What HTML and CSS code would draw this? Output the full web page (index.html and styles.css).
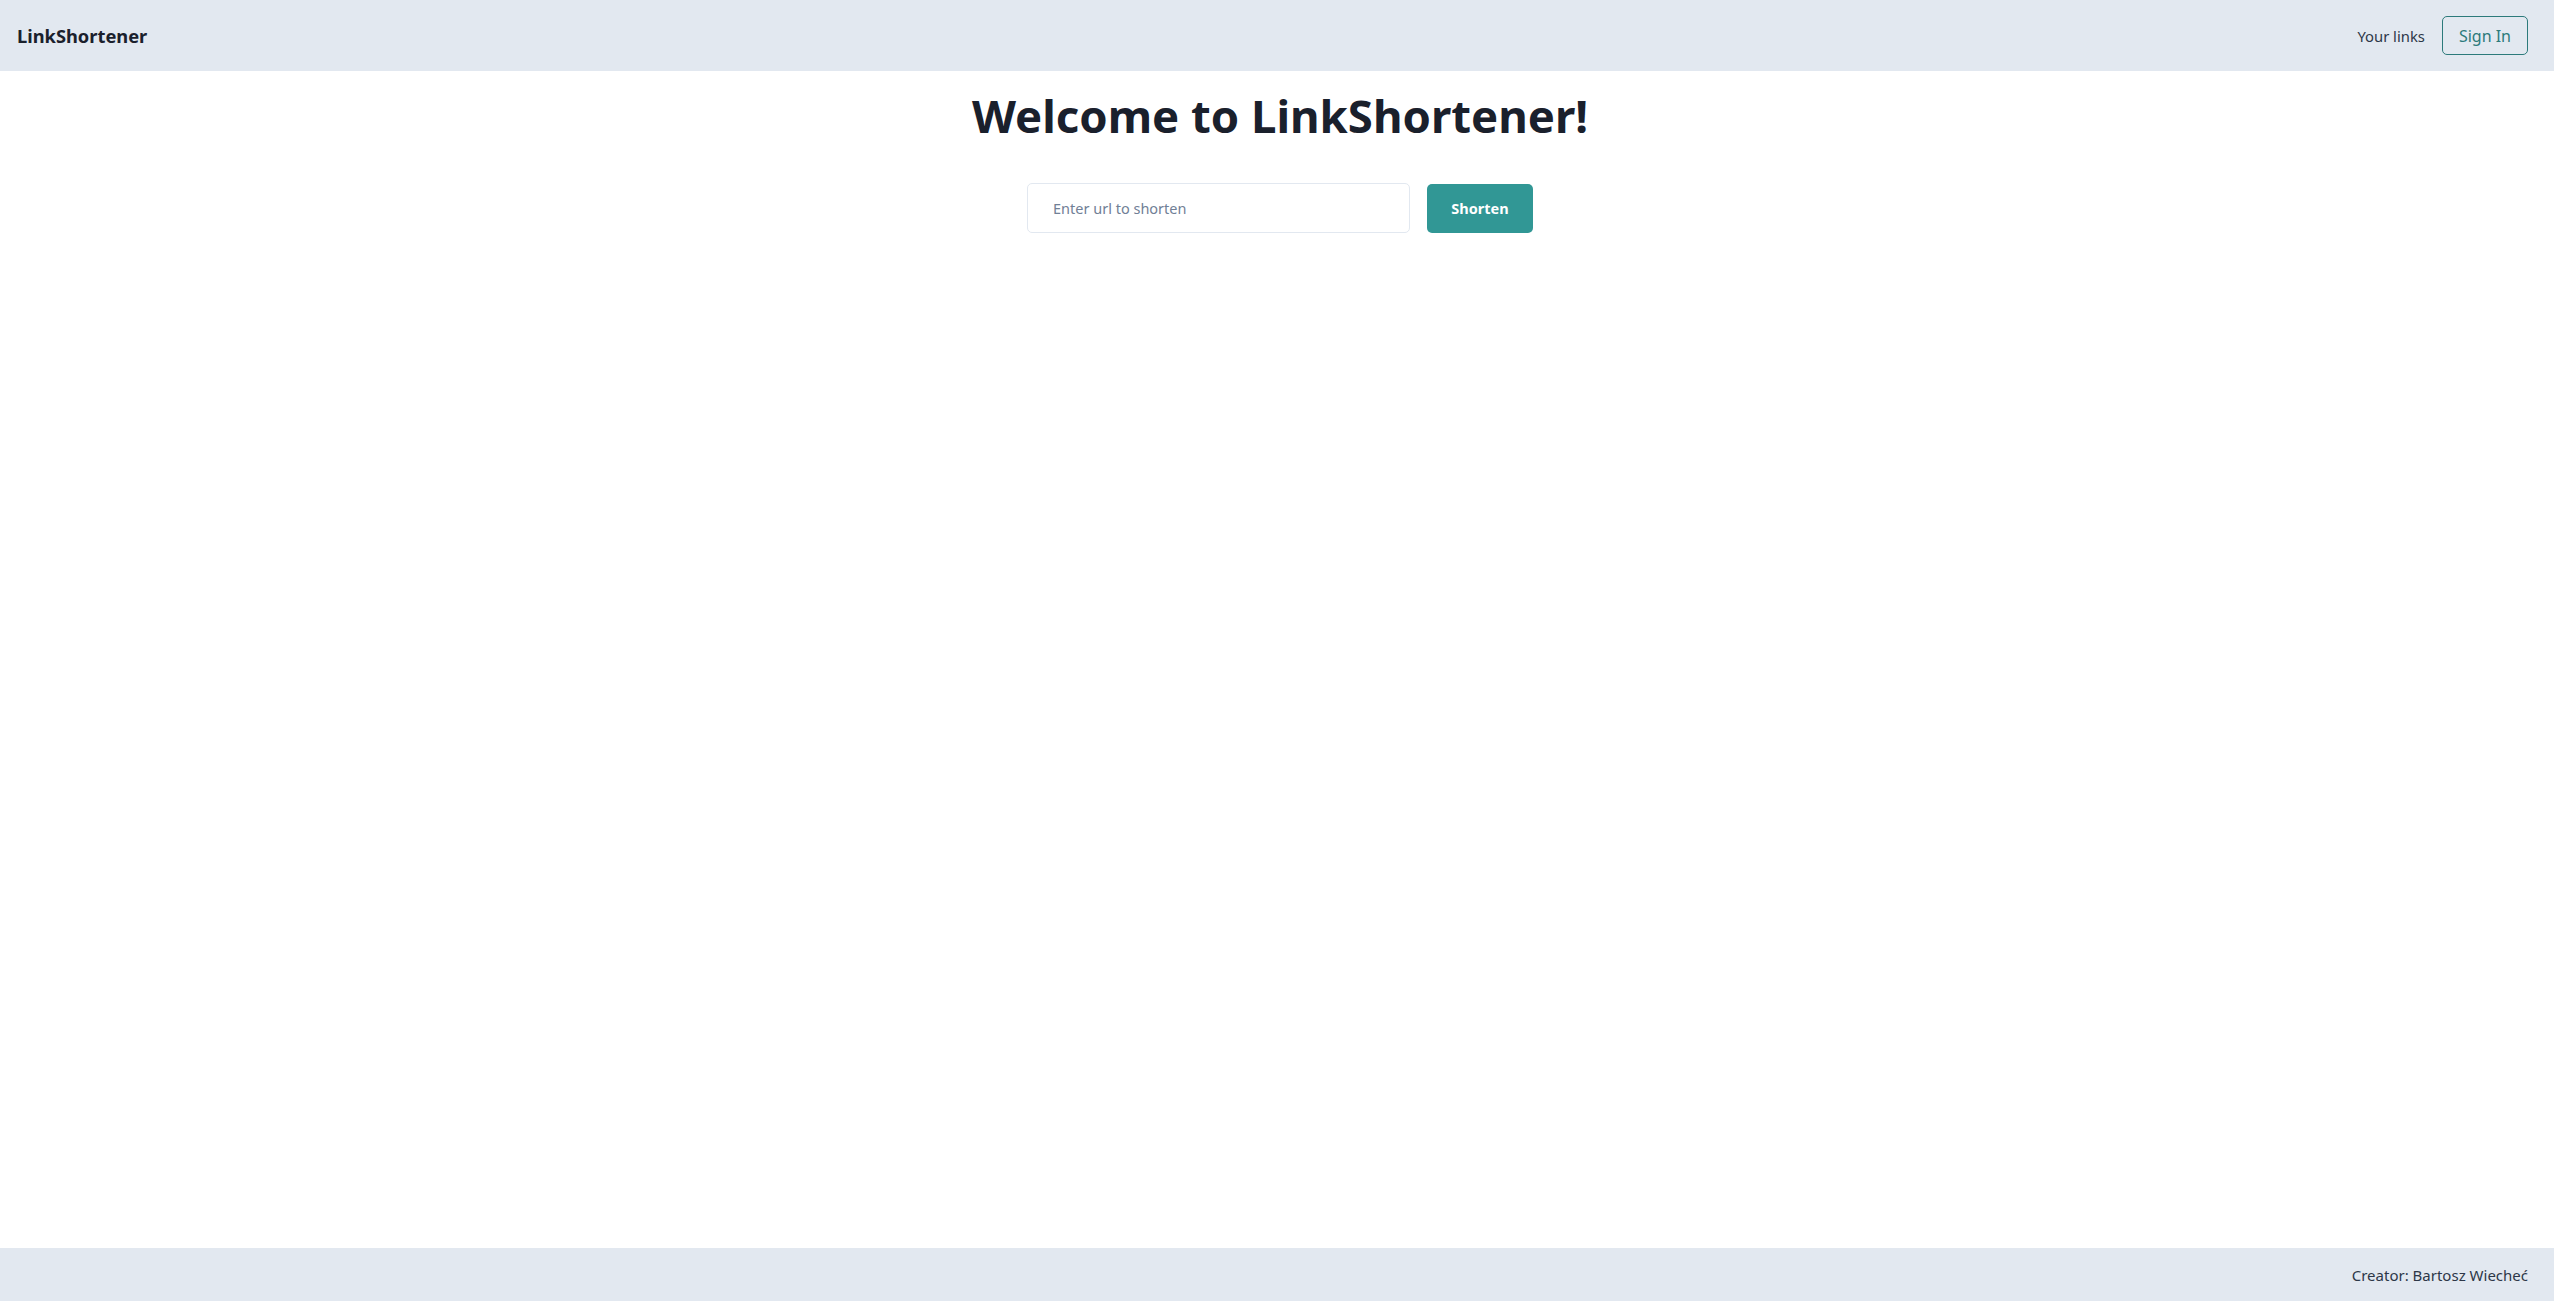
FILE: index.html
```html
<!DOCTYPE html>
<html lang="en">
<head>
<meta charset="utf-8">
<title>LinkShortener</title>
<link rel="stylesheet" href="styles.css">
</head>
<body>
<div class="page">
  <header class="navbar">
    <a class="brand" href="#">LinkShortener</a>
    <nav class="nav-right">
      <a class="nav-link" href="#">Your links</a>
      <button class="btn-outline" type="button">Sign In</button>
    </nav>
  </header>
  <main class="main">
    <h1 class="title">Welcome to LinkShortener!</h1>
    <form class="shorten-form">
      <input class="url-input" type="text" placeholder="Enter url to shorten">
      <button class="btn-primary" type="button">Shorten</button>
    </form>
  </main>
  <footer class="footer">
    <span class="footer-text">Creator: Bartosz Wiecheć</span>
  </footer>
</div>
</body>
</html>
```
FILE: styles.css
```css
* { box-sizing: border-box; }
html, body { margin: 0; padding: 0; height: 100%; }
body {
  font-family: "Segoe UI", "Noto Sans", "Open Sans", sans-serif;
  color: #1a202c;
  background: #ffffff;
}
.page {
  min-height: 100vh;
  display: flex;
  flex-direction: column;
}
.navbar {
  height: 71px;
  background: #e2e8f0;
  display: flex;
  align-items: center;
  justify-content: space-between;
  padding: 0 26px 0 17px;
}
.brand {
  font-size: 18.3px;
  font-weight: 700;
  color: #1a202c;
  text-decoration: none;
}
.nav-right {
  display: flex;
  align-items: center;
  gap: 17px;
}
.nav-link {
  font-size: 14.8px;
  color: #2d3748;
  text-decoration: none;
}
.btn-outline {
  height: 39px;
  padding: 0 16px;
  font-family: inherit;
  font-size: 16px;
  color: #2c7a7b;
  background: transparent;
  border: 1px solid #2c7a7b;
  border-radius: 5px;
}
.main {
  flex: 1;
  display: flex;
  flex-direction: column;
  align-items: center;
  padding-left: 6px;
}
.title {
  margin: 14px 0 0;
  font-size: 45.5px;
  font-weight: 700;
  line-height: 60px;
  color: #1a202c;
}
.shorten-form {
  margin-top: 38px;
  display: flex;
  align-items: center;
  gap: 17px;
}
.url-input {
  width: 383px;
  height: 50px;
  padding: 0 25px;
  font-family: inherit;
  font-size: 14.5px;
  color: #1a202c;
  border: 1px solid #e2e8f0;
  border-radius: 5px;
  outline: none;
}
.url-input::placeholder { color: #718096; }
.btn-primary {
  width: 106px;
  height: 49px;
  font-family: inherit;
  font-size: 14.5px;
  font-weight: 700;
  color: #ffffff;
  background: #319795;
  border: none;
  border-radius: 5px;
}
.footer {
  height: 53px;
  background: #e2e8f0;
  display: flex;
  align-items: center;
  justify-content: flex-end;
  padding: 0 26px;
}
.footer-text {
  font-size: 15px;
  color: #2d3748;
}
```
